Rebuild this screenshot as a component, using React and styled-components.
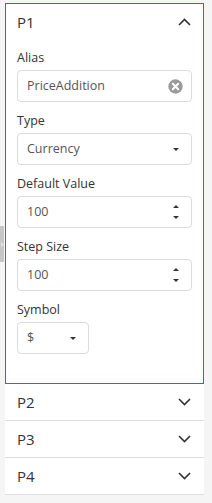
import React from "react";
import styled, { createGlobalStyle } from "styled-components";

const Global = createGlobalStyle`
  html, body { margin: 0; padding: 0; background: #f5f5f5; }
  body { font-family: "Open Sans", "Noto Sans", sans-serif; color: #333; }
  * { box-sizing: border-box; }
`;

const Page = styled.div`
  position: relative;
  padding: 3px 0 0 5px;
  min-height: 503px;
`;

const Accordion = styled.div`
  width: 199px;
`;

const OpenItem = styled.section`
  background: #fff;
  border: 1px solid #3b6ea6;
`;

const Header = styled.div`
  height: ${(p) => (p.$open ? 38 : 36)}px;
  display: flex;
  align-items: center;
  justify-content: space-between;
  padding: ${(p) => (p.$open ? "0 12px 2px 11px" : "0 13px 0 12px")};
  font-size: 15px;
  color: #333;
`;

const ClosedItem = styled.div`
  background: #fff;
  border-bottom: 1px solid #dedede;
`;

const Body = styled.div`
  padding: 8px 11px 29px 11px;
  display: flex;
  flex-direction: column;
  gap: 11px;
`;

const Field = styled.div`
  display: flex;
  flex-direction: column;
  gap: 4px;
`;

const Label = styled.div`
  font-size: 12.5px;
  line-height: 16px;
  color: #333;
`;

const Box = styled.div`
  height: 32px;
  width: ${(p) => p.$w || "175px"};
  border: 1px solid #dcdcdc;
  border-radius: 4px;
  background: #fff;
  display: flex;
  align-items: center;
  justify-content: space-between;
  padding: 0 ${(p) => p.$pr || 12}px 0 9px;
  font-size: 12.5px;
  color: #555;
`;

const Value = styled.span`
  line-height: 16px;
`;

const Spin = styled.div`
  display: flex;
  flex-direction: column;
  gap: 8px;
  align-items: center;
`;

const Splitter = styled.div`
  position: absolute;
  left: 0;
  top: 226px;
  width: 4px;
  height: 36px;
  background: #c7c7c7;
  display: flex;
  align-items: center;
  justify-content: center;
`;

const Chevron = ({ up }) => (
  <svg width="13" height="8" viewBox="0 0 13 8">
    <polyline
      points={up ? "1,7 6.5,1.5 12,7" : "1,1 6.5,6.5 12,1"}
      fill="none"
      stroke="#333"
      strokeWidth="1.6"
    />
  </svg>
);

const Caret = ({ up }) => (
  <svg width="6" height="3" viewBox="0 0 6 3">
    <polygon points={up ? "0,3 6,3 3,0" : "0,0 6,0 3,3"} fill="#333" />
  </svg>
);

const Clear = () => (
  <svg width="15" height="15" viewBox="0 0 15 15">
    <circle cx="7.5" cy="7.5" r="7.2" fill="#9b9b9b" />
    <path d="M4.8 4.8 L10.2 10.2 M10.2 4.8 L4.8 10.2" stroke="#fff" strokeWidth="2" strokeLinecap="round" />
  </svg>
);

export default function App() {
  return (
    <>
      <Global />
      <Page>
        <Splitter>
          <svg width="3" height="5" viewBox="0 0 3 5">
            <polygon points="0,0 3,2.5 0,5" fill="#e2e2e2" />
          </svg>
        </Splitter>
        <Accordion>
          <OpenItem>
            <Header $open>
              <span>P1</span>
              <Chevron up />
            </Header>
            <Body>
              <Field>
                <Label>Alias</Label>
                <Box $pr={8}>
                  <Value>PriceAddition</Value>
                  <Clear />
                </Box>
              </Field>
              <Field>
                <Label>Type</Label>
                <Box>
                  <Value>Currency</Value>
                  <Caret />
                </Box>
              </Field>
              <Field>
                <Label>Default Value</Label>
                <Box>
                  <Value>100</Value>
                  <Spin>
                    <Caret up />
                    <Caret />
                  </Spin>
                </Box>
              </Field>
              <Field>
                <Label>Step Size</Label>
                <Box>
                  <Value>100</Value>
                  <Spin>
                    <Caret up />
                    <Caret />
                  </Spin>
                </Box>
              </Field>
              <Field>
                <Label>Symbol</Label>
                <Box $w="72px">
                  <Value>$</Value>
                  <Caret />
                </Box>
              </Field>
            </Body>
          </OpenItem>
          {["P2", "P3", "P4"].map((t) => (
            <ClosedItem key={t}>
              <Header>
                <span>{t}</span>
                <Chevron />
              </Header>
            </ClosedItem>
          ))}
        </Accordion>
      </Page>
    </>
  );
}
